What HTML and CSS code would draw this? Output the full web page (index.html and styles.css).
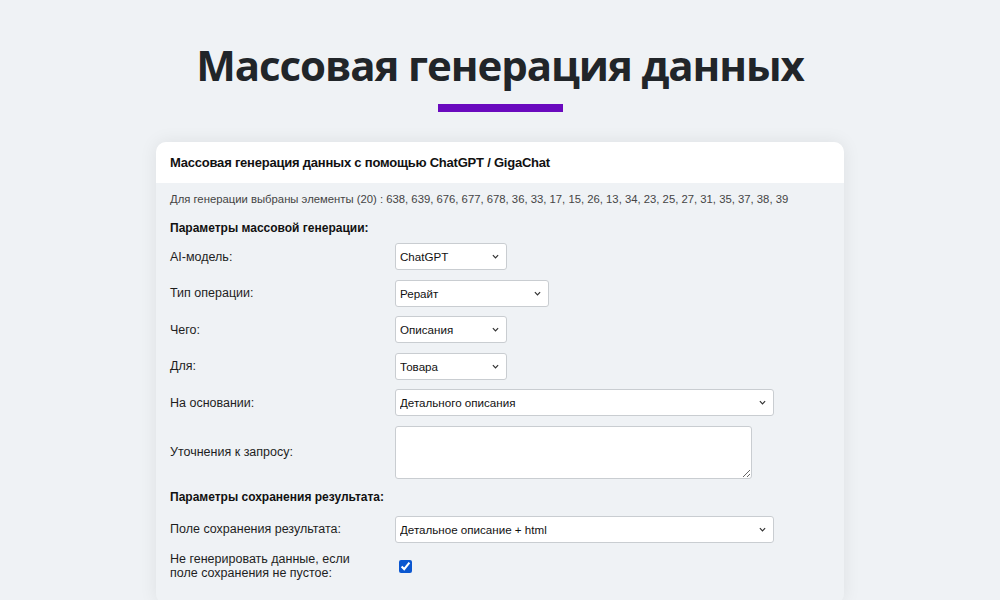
FILE: index.html
```html
<!DOCTYPE html>
<html lang="ru">
<head>
<meta charset="utf-8">
<title>Массовая генерация данных</title>
<link rel="stylesheet" href="styles.css">
</head>
<body>
<h1 class="page-title">Массовая генерация данных</h1>
<div class="title-bar"></div>

<div class="card">
  <div class="card-header">Массовая генерация данных с помощью ChatGPT / GigaChat</div>
  <div class="card-body">
    <p class="info">Для генерации выбраны элементы (20) : 638, 639, 676, 677, 678, 36, 33, 17, 15, 26, 13, 34, 23, 25, 27, 31, 35, 37, 38, 39</p>

    <div class="section-title">Параметры массовой генерации:</div>
    <div class="form-grid">
      <label class="lbl">AI-модель:</label>
      <span class="sel w-s"><select><option>ChatGPT</option></select><svg class="chev" viewBox="0 0 8 5"><path d="M1 1 L4 4 L7 1"/></svg></span>

      <label class="lbl">Тип операции:</label>
      <span class="sel w-m"><select><option>Рерайт</option></select><svg class="chev" viewBox="0 0 8 5"><path d="M1 1 L4 4 L7 1"/></svg></span>

      <label class="lbl">Чего:</label>
      <span class="sel w-s"><select><option>Описания</option></select><svg class="chev" viewBox="0 0 8 5"><path d="M1 1 L4 4 L7 1"/></svg></span>

      <label class="lbl">Для:</label>
      <span class="sel w-s"><select><option>Товара</option></select><svg class="chev" viewBox="0 0 8 5"><path d="M1 1 L4 4 L7 1"/></svg></span>

      <label class="lbl">На основании:</label>
      <span class="sel w-l"><select><option>Детального описания</option></select><svg class="chev" viewBox="0 0 8 5"><path d="M1 1 L4 4 L7 1"/></svg></span>

      <label class="lbl">Уточнения к запросу:</label>
      <textarea class="area"></textarea>
    </div>

    <div class="section-title second">Параметры сохранения результата:</div>
    <div class="form-grid">
      <label class="lbl">Поле сохранения результата:</label>
      <span class="sel w-l"><select><option>Детальное описание + html</option></select><svg class="chev" viewBox="0 0 8 5"><path d="M1 1 L4 4 L7 1"/></svg></span>

      <label class="lbl lbl-2">Не генерировать данные, если<br>поле сохранения не пустое:</label>
      <span class="check-cell"><input type="checkbox" checked></span>
    </div>
  </div>
</div>
</body>
</html>
```

FILE: styles.css
```css
html, body {
  margin: 0;
  padding: 0;
}
body {
  background: #eff2f5;
  font-family: "Liberation Sans", Arial, sans-serif;
  color: #222;
  height: 600px;
  overflow: hidden;
}
.page-title {
  font-family: "Open Sans", "Noto Sans", sans-serif;
  font-weight: 700;
  font-size: 42px;
  line-height: 60px;
  color: #212529;
  text-align: center;
  margin: 35px 0 0 0;
  letter-spacing: -1.1px;
}
.title-bar {
  width: 125px;
  height: 8px;
  background: #6a0abe;
  margin: 9px auto 0;
}
.card {
  width: 688px;
  margin: 30px auto 0;
  border-radius: 10px;
  background: #eff2f5;
  box-shadow: 0 0 18px rgba(0, 0, 0, 0.08);
  overflow: hidden;
}
.card-header {
  background: #fff;
  height: 41px;
  line-height: 41px;
  padding: 0 14px;
  font-size: 13px;
  letter-spacing: -0.22px;
  font-weight: 700;
  color: #111;
}
.card-body {
  padding: 8px 14px 24px;
}
.info {
  margin: 0;
  font-size: 11.3px;
  line-height: 16px;
  color: #444;
}
.section-title {
  font-size: 12px;
  font-weight: 700;
  line-height: 16px;
  color: #111;
  margin: 13px 0 7px;
}
.section-title.second {
  margin: 10px 0 11px;
}
.form-grid {
  display: grid;
  grid-template-columns: 225px 1fr;
  row-gap: 9.5px;
  align-items: center;
}
.lbl {
  font-size: 12.5px;
  color: #1e1e1e;
  line-height: 14px;
}
.sel {
  position: relative;
  display: inline-block;
  height: 27px;
}
.sel select {
  -webkit-appearance: none;
  appearance: none;
  width: 100%;
  height: 27px;
  box-sizing: border-box;
  border: 1px solid #c9cdd1;
  border-radius: 3px;
  background: #fff;
  font-family: "Liberation Sans", Arial, sans-serif;
  font-size: 11.6px;
  color: #111;
  padding: 0 20px 0 4px;
  margin: 0;
}
.chev {
  position: absolute;
  right: 8px;
  top: 11px;
  width: 7px;
  height: 5px;
  fill: none;
  stroke: #333;
  stroke-width: 1.4;
  pointer-events: none;
}
.w-s { width: 112px; }
.w-m { width: 154px; }
.w-l { width: 379px; }
.area {
  width: 357px;
  height: 53px;
  box-sizing: border-box;
  border: 1px solid #c9cdd1;
  border-radius: 3px;
  background: #fff;
  margin: 0;
  resize: both;
}
.check-cell {
  display: flex;
  align-items: center;
}
.check-cell input {
  margin: 0 0 0 4px;
  width: 13px;
  height: 13px;
  accent-color: #0b57d0;
}
```
